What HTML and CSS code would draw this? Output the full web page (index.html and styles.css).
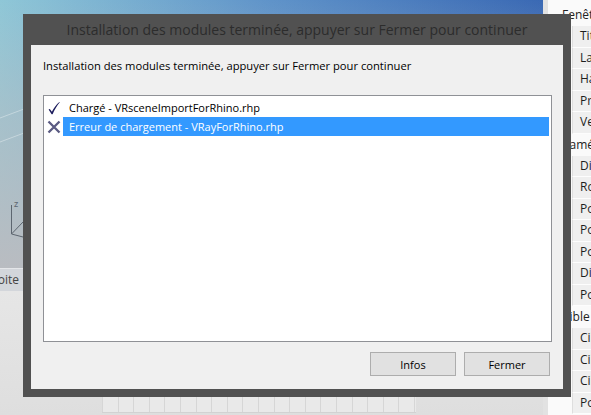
FILE: index.html
```html
<!DOCTYPE html>
<html lang="fr">
<head>
  <meta charset="UTF-8">
  <title>Installation des modules</title>
  <link rel="stylesheet" href="styles.css">
</head>
<body>
  <div class="app">
    <div class="workspace">
      <div class="viewport">
        <svg class="viewport-lines" width="543" height="268" viewBox="0 0 543 268">
          <path d="M0 118 L40 103 M0 142 L40 127" stroke="rgba(255,255,255,0.35)" stroke-width="1" fill="none"/>
          <path d="M11.5 205 V234 L23 237 M11.5 234 L23 222" stroke="#5d6670" stroke-width="1" fill="none"/>
          <text x="14" y="207" font-size="8" fill="#5d6670" font-family="DejaVu Sans, sans-serif">z</text>
        </svg>
      </div>
      <div class="view-tabs">
        <span class="view-tab">Droite</span>
      </div>
      <div class="workspace-lower">
        <div class="timeline-grid"></div>
      </div>
    </div>

    <!-- Propriétés de la fenêtre -->
    <aside class="props">
      <div class="props-head">Fenêtre</div>
      <div class="props-row">Titre</div>
      <div class="props-row">Largeur</div>
      <div class="props-row">Hauteur</div>
      <div class="props-row">Projection</div>
      <div class="props-row">Verrouillé</div>
      <div class="props-head">Caméra</div>
      <div class="props-row">Distance focale</div>
      <div class="props-row">Rotation</div>
      <div class="props-row">Position X</div>
      <div class="props-row">Position Y</div>
      <div class="props-row">Position Z</div>
      <div class="props-row">Distance à la cible</div>
      <div class="props-row">Position</div>
      <div class="props-head">Cible</div>
      <div class="props-row">Cible X</div>
      <div class="props-row">Cible Y</div>
      <div class="props-row">Cible Z</div>
      <div class="props-row">Position</div>
    </aside>
  </div>

  <!-- Dialog -->
  <div class="dialog">
    <div class="dialog-title">Installation des modules terminée, appuyer sur Fermer pour continuer</div>
    <div class="dialog-body">
      <p class="dialog-label">Installation des modules terminée, appuyer sur Fermer pour continuer</p>
      <ul class="module-list">
        <li class="module-item">
          <span class="module-icon">
            <svg width="12" height="14" viewBox="0 0 12 14">
              <path d="M0.6 8.6 L1.8 7.9 L3.9 10.7 C5.8 6.8 8.3 3.6 11.4 0.9 L11.8 1.3 C9.1 4.4 6.6 8.6 4.6 13.3 L3.6 13.3 Z" fill="#1b1b5c"/>
            </svg>
          </span>
          <span class="module-name">Chargé - VRsceneImportForRhino.rhp</span>
        </li>
        <li class="module-item is-selected">
          <span class="module-icon">
            <svg width="14" height="14" viewBox="0 0 14 14">
              <path d="M1.5 1.5 L12.5 12.5 M12.5 1.5 L1.5 12.5" stroke="#5a5a82" stroke-width="2.3" fill="none"/>
            </svg>
          </span>
          <span class="module-name">Erreur de chargement - VRayForRhino.rhp</span>
        </li>
      </ul>
      <div class="dialog-buttons">
        <button class="dialog-btn">Infos</button>
        <button class="dialog-btn">Fermer</button>
      </div>
    </div>
  </div>
</body>
</html>
```

FILE: styles.css
```css
body {
  margin: 0;
  width: 591px;
  height: 415px;
  overflow: hidden;
  position: relative;
  font-family: 'Open Sans', 'Liberation Sans', sans-serif;
  font-size: 11px;
  color: #1e1e1e;
  background: #e4e4e4;
}

.app {
  display: flex;
  height: 415px;
}

.workspace {
  width: 543px;
  display: flex;
  flex-direction: column;
}

.viewport {
  height: 268px;
  background:
    linear-gradient(to bottom, rgba(185, 188, 193, 0) 0%, rgba(185, 188, 193, 0.55) 45%, #b9bcc1 100%),
    linear-gradient(to right, #8fc7d7 0%, #5f93c9 50%, #3a69b4 100%);
}

.viewport-lines {
  display: block;
}

.view-tabs {
  height: 22px;
  display: flex;
  background: #d3d6db;
  border-top: 1px solid #e4e6e9;
}

.view-tab {
  width: 23px;
  overflow: hidden;
  display: flex;
  justify-content: flex-end;
  padding-right: 4px;
  box-sizing: border-box;
  line-height: 21px;
  font-size: 12px;
  color: #444;
  white-space: nowrap;
}

.workspace-lower {
  flex: 1;
  display: flex;
  flex-direction: column;
  background: linear-gradient(to bottom, #e6e6e6, #dedede);
}

/* little grid under the dialog */
.timeline-grid {
  margin: auto 0 2px 102px;
  width: 314px;
  height: 40px;
  border-bottom: 1px solid #d2d2d2;
  background:
    repeating-linear-gradient(to right, #d6d6d6 0, #d6d6d6 1px, transparent 1px, transparent 15.6px),
    #e9e9e9;
}

.props {
  flex: 1;
  background: #fafafa;
  border-left: 5px solid #e2e2e2;
  padding-top: 4px;
  font-size: 12px;
}

.props-head {
  height: 22px;
  line-height: 22px;
  padding-left: 14px;
  white-space: nowrap;
  color: #222;
}

.props-row {
  height: 20.5px;
  line-height: 20.5px;
  margin-left: 24px;
  padding-left: 7px;
  background: #efefef;
  border-left: 1px solid #dedede;
  border-bottom: 1px solid #fdfdfd;
  white-space: nowrap;
  overflow: hidden;
}

.dialog {
  position: absolute;
  left: 23px;
  top: 14px;
  width: 548px;
  height: 383px;
  box-sizing: border-box;
  padding: 0 8px 8px;
  background: #515151;
  display: flex;
  flex-direction: column;
}

.dialog-title {
  height: 31px;
  line-height: 31px;
  text-align: center;
  font-size: 14px;
  color: #2c2c2c;
  white-space: nowrap;
}

.dialog-body {
  flex: 1;
  background: #f0f0f0;
  display: flex;
  flex-direction: column;
  padding: 0 11px 13px 12px;
}

.dialog-label {
  margin: 13px 0 21px;
  line-height: 16px;
  font-size: 11.2px;
  color: #000;
}

.module-list {
  flex: 1;
  list-style: none;
  margin: 0;
  padding: 2px 2px 0 0;
  background: #fff;
  border: 1px solid #8f9196;
}

.module-item {
  display: flex;
  align-items: center;
  height: 19px;
}

.module-icon {
  width: 19px;
  display: flex;
  justify-content: center;
  align-items: center;
}

.module-name {
  flex: 1;
  padding-left: 6px;
  line-height: 19px;
  color: #000;
}

.module-item.is-selected .module-name {
  background: #3399ff;
  color: #fff;
}

.dialog-buttons {
  display: flex;
  justify-content: flex-end;
  gap: 8px;
  margin: 10px 2px 0 0;
}

.dialog-btn {
  width: 86px;
  height: 24px;
  font-family: 'Open Sans', 'Liberation Sans', sans-serif;
  font-size: 11px;
  color: #000;
  background: #e1e1e1;
  border: 1px solid #adadad;
  padding: 0;
}
```
